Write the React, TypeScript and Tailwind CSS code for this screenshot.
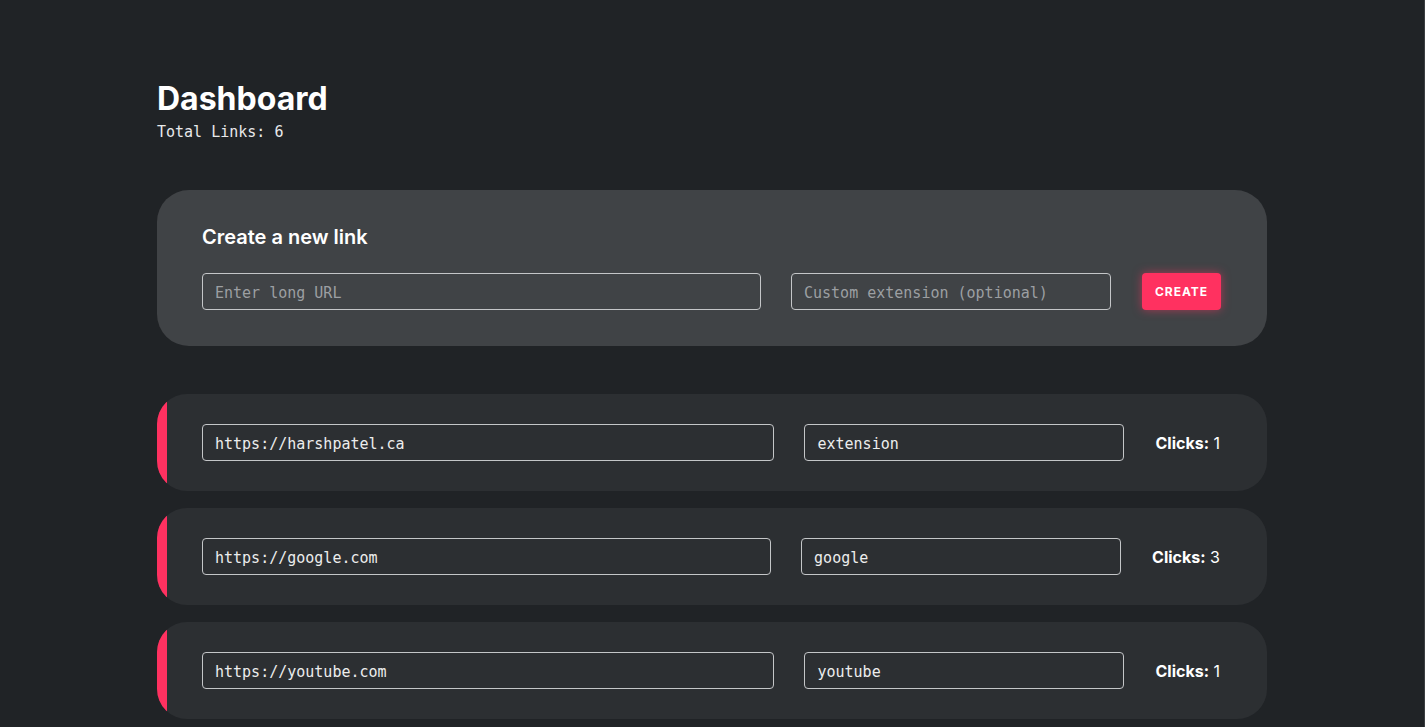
import { useState } from 'react'

const mono = 'font-["DejaVu_Sans_Mono",monospace]'

const links = [
  { url: 'https://harshpatel.ca', ext: 'extension', clicks: 1 },
  { url: 'https://google.com', ext: 'google', clicks: 3 },
  { url: 'https://youtube.com', ext: 'youtube', clicks: 1 },
]

const inputCls =
  'h-[37px] rounded-[4px] border border-[#c4c6c8] bg-transparent px-3 pt-[2px] text-[15px] text-[#eceded] outline-none placeholder:text-[#9c9fa2] ' +
  mono

function LinkRow({ url, ext, clicks }: { url: string; ext: string; clicks: number }) {
  return (
    <div className="flex h-[97px] overflow-hidden rounded-[30px] bg-[#2c2f32]">
      <div className="w-[10px] shrink-0 bg-[#ff3160]" />
      <div className="flex flex-1 items-center pl-[35px] pr-[47px]">
        <input className={inputCls + ' min-w-0 flex-1'} defaultValue={url} />
        <input className={inputCls + ' ml-[30px] w-[320px]'} defaultValue={ext} />
        <p className="ml-auto pl-[31px] text-[16px] text-white">
          <span className="font-bold">Clicks:</span> {clicks}
        </p>
      </div>
    </div>
  )
}

export default function App() {
  const [url, setUrl] = useState('')
  const [ext, setExt] = useState('')

  return (
    <div className='h-screen overflow-hidden border-r border-[#3b3e41] bg-[#202326] font-["Inter",sans-serif] text-white'>
      <div className="mx-auto w-[1110px] pt-[79px]">
        {/* Header */}
        <h1 className="text-[32px] font-bold leading-[40px]">Dashboard</h1>
        <p className={'mt-[3px] text-[15px] leading-[20px] text-[#e8e9ea] ' + mono}>Total Links: {links.length + 3}</p>

        {/* Create card */}
        <div className="mt-[48px] rounded-[32px] bg-[#404346] px-[45px] pb-[36px] pt-[33px]">
          <h2 className="text-[20px] font-semibold leading-[28px]">Create a new link</h2>
          <div className="mt-[22px] flex items-center">
            <input
              className={inputCls + ' min-w-0 flex-1'}
              placeholder="Enter long URL"
              value={url}
              onChange={(e) => setUrl(e.target.value)}
            />
            <input
              className={inputCls + ' ml-[30px] w-[320px]'}
              placeholder="Custom extension (optional)"
              value={ext}
              onChange={(e) => setExt(e.target.value)}
            />
            <button className="ml-[31px] mr-[1px] h-[37px] w-[79px] rounded-[4px] bg-[#ff3160] text-[12px] font-bold tracking-[0.08em] text-white shadow-[0_0_10px_rgba(255,49,96,0.55)]">
              CREATE
            </button>
          </div>
        </div>

        {/* Links */}
        <div className="mt-[48px] flex flex-col gap-[17px]">
          {links.map((l) => (
            <LinkRow key={l.ext} {...l} />
          ))}
        </div>
      </div>
    </div>
  )
}
